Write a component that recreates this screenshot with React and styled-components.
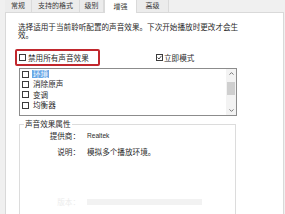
import React from "react"
import styled, { createGlobalStyle } from "styled-components"

const GlobalStyle = createGlobalStyle`
  html, body {
    margin: 0;
    padding: 0;
    background: #f0f0f0;
  }
  body {
    font-family: "Noto Sans CJK SC", "Noto Sans", "Liberation Sans", sans-serif;
    color: #262626;
  }
`

const Window = styled.div`
  width: 285px;
  height: 214px;
  overflow: hidden;
  box-sizing: border-box;
  padding-left: 5px;
  padding-right: 1px;
  background: #f0f0f0;
  display: flex;
  flex-direction: column;
`

const TabStrip = styled.div`
  display: flex;
  height: 12px;
  position: relative;
  z-index: 1;
`

const Tab = styled.div`
  width: ${props => props.width}px;
  box-sizing: border-box;
  height: ${props => props.active ? 13 : 12}px;
  display: flex;
  justify-content: center;
  align-items: center;
  font-size: 7px;
  line-height: 8px;
  color: #3a3a3a;
  background: ${props => props.active ? "#fff" : "#ececec"};
  border-right: 1px solid #dadada;
  border-left: ${props => props.active ? "1px solid #dadada" : "none"};
  padding-bottom: 2px;
`

const Panel = styled.div`
  flex: 1;
  background: #fff;
  border: 1px solid #d9d9d9;
  border-bottom: none;
  display: flex;
  flex-direction: column;
`

const Description = styled.div`
  margin: 10px 0 0 12px;
  width: 230px;
  font-size: 7.6px;
  line-height: 8px;
  color: #2a2a2a;
`

const OptionRow = styled.div`
  display: flex;
  align-items: center;
  margin-top: 10px;
  margin-left: 9px;
`

const Highlight = styled.div`
  width: 85px;
  height: 17px;
  box-sizing: border-box;
  border: 2px solid #c1272d;
  border-radius: 2px;
  display: flex;
  align-items: center;
  padding-left: 2px;
`

const Check = styled.label`
  display: flex;
  align-items: center;
  gap: ${props => props.gap ?? 2}px;
  font-size: 7.6px;
  line-height: 8px;
  color: #2a2a2a;
  margin-left: ${props => props.offset || 0}px;
`

const Box = styled.span`
  width: 7px;
  height: 7px;
  box-sizing: border-box;
  border: 1px solid #3c3c3c;
  background: #fff;
  display: flex;
  align-items: center;
  justify-content: center;
  flex-shrink: 0;
`

const ListBox = styled.div`
  margin: 2px 0 0 13px;
  width: 218px;
  height: 48px;
  box-sizing: border-box;
  border: 1px solid #8c8c8c;
  display: flex;
  overflow: hidden;
`

const Items = styled.div`
  flex: 1;
  display: flex;
  flex-direction: column;
  padding-left: 2px;
`

const Item = styled.div`
  height: 10.3px;
  flex-shrink: 0;
  display: flex;
  align-items: center;
  gap: 3px;
  font-size: 7.6px;
  line-height: 8px;
`

const ItemText = styled.span`
  padding: 0 1px;
  background: ${props => props.selected ? "#6aa8e6" : "transparent"};
  color: ${props => props.selected ? "#f4f9ff" : "#2a2a2a"};
`

const ScrollBar = styled.div`
  width: 10px;
  background: #f3f3f3;
  display: flex;
  flex-direction: column;
  align-items: center;
`

const Arrow = styled.div`
  height: 9px;
  display: flex;
  align-items: center;
  justify-content: center;
`

const Thumb = styled.div`
  width: 8px;
  height: 13px;
  margin-top: 4px;
  background: #cfcfcf;
`

const Track = styled.div`
  flex: 1;
`

const Group = styled.fieldset`
  margin: 4px 0 0 13px;
  width: 217px;
  box-sizing: border-box;
  border: 1px solid #dcdcdc;
  border-bottom: none;
  padding: 0;
  flex: 1;
  min-width: 0;
`

const Legend = styled.legend`
  margin-left: 4px;
  padding: 0 1px;
  font-size: 7.6px;
  line-height: 8px;
  color: #2a2a2a;
`

const PropRow = styled.div`
  display: flex;
  align-items: center;
  margin-top: ${props => props.top}px;
  font-size: 7.6px;
  line-height: 8px;
  color: ${props => props.faint ? "#ececec" : "#2a2a2a"};
`

const PropLabel = styled.span`
  width: 60px;
  text-align: right;
`

const PropValue = styled.span`
  margin-left: 7px;
  font-size: ${props => props.latin ? "6.6px" : "7.6px"};
  font-family: ${props => props.latin ? '"Liberation Sans", sans-serif' : "inherit"};
`

const FaintField = styled.span`
  margin-left: 7px;
  width: 115px;
  height: 6px;
  background: #f2f2f2;
`

function Checkbox({ checked }) {
  return (
    <Box>
      {checked && (
        <svg width="5" height="5" viewBox="0 0 5 5">
          <path d="M0.6 2.6 L2 4 L4.5 0.8" fill="none" stroke="#333" strokeWidth="0.9" />
        </svg>
      )}
    </Box>
  )
}

function Chevron({ up }) {
  return (
    <svg width="5" height="3" viewBox="0 0 5 3">
      <path d={up ? "M0.5 2.6 L2.5 0.6 L4.5 2.6" : "M0.5 0.4 L2.5 2.4 L4.5 0.4"}
        fill="none" stroke="#6a6a6a" strokeWidth="0.9" />
    </svg>
  )
}

const tabs = [
  { label: "常规", width: 27 },
  { label: "支持的格式", width: 48 },
  { label: "级别", width: 24 },
  { label: "增强", width: 33, active: true },
  { label: "高级", width: 32 }
]

const effects = ["环境", "消除原声", "变调", "均衡器"]

export default function App() {
  return (
    <Window>
      <GlobalStyle />
      <TabStrip>
        {tabs.map(tab => (
          <Tab key={tab.label} width={tab.width} active={tab.active}>{tab.label}</Tab>
        ))}
      </TabStrip>
      <Panel>
        <Description>
          选择适用于当前聆听配置的声音效果。下次开始播放时更改才会生效。
        </Description>
        <OptionRow>
          <Highlight>
            <Check>
              <Checkbox />
              禁用所有声音效果
            </Check>
          </Highlight>
          <Check offset={56} gap={1}>
            <Checkbox checked />
            立即模式
          </Check>
        </OptionRow>
        <ListBox>
          <Items>
            {effects.map((name, i) => (
              <Item key={name}>
                <Checkbox />
                <ItemText selected={i === 0}>{name}</ItemText>
              </Item>
            ))}
          </Items>
          <ScrollBar>
            <Arrow><Chevron up /></Arrow>
            <Thumb />
            <Track />
            <Arrow><Chevron /></Arrow>
          </ScrollBar>
        </ListBox>
        <Group>
          <Legend>声音效果属性</Legend>
          <PropRow top={4}>
            <PropLabel>提供商：</PropLabel>
            <PropValue latin>Realtek</PropValue>
          </PropRow>
          <PropRow top={8}>
            <PropLabel>说明：</PropLabel>
            <PropValue>模拟多个播放环境。</PropValue>
          </PropRow>
          <PropRow top={42} faint>
            <PropLabel>版本：</PropLabel>
            <FaintField />
          </PropRow>
        </Group>
      </Panel>
    </Window>
  )
}
